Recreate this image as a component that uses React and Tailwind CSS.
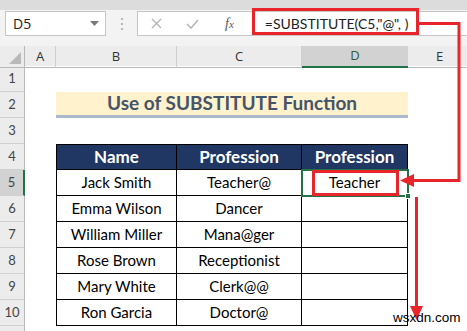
import React from "react";

const F = { fontFamily: "Lato, 'Noto Sans', sans-serif" };

const data = [
  ["Jack Smith", "Teacher@", "Teacher"],
  ["Emma Wilson", "Dancer", ""],
  ["William Miller", "Mana@ger", ""],
  ["Rose Brown", "Receptionist", ""],
  ["Mary White", "Clerk@@", ""],
  ["Ron Garcia", "Doctor@", ""],
];

function RowHead({ n, active }) {
  return (
    <div
      className={
        "h-[26px] flex items-center justify-center text-[13px] text-[#444] border-b border-[#d0d0d0] " +
        (active
          ? "bg-[#d2d2d2] border-r-2 border-r-[#217346]"
          : "bg-[#ececec] border-r border-r-[#b8b8b8]")
      }
    >
      {n}
    </div>
  );
}

const GRID = "grid grid-cols-[25px_31px_121px_125px_106px_1fr]";

export default function App() {
  return (
    <div className="relative w-[467px] h-[331px] overflow-hidden bg-white" style={{ fontFamily: "'Segoe UI', 'Open Sans', sans-serif" }}>
      {/* top band */}
      <div className="h-[10px] bg-[#dcdcdc]" />
      {/* formula row */}
      <div className="h-[36px] bg-[#f3f3f3] flex items-start pt-[1px]">
        <div className="ml-[5px] w-[101px] h-[25px] bg-white border border-[#c6c6c6] flex items-center justify-between pl-[7px] pr-[6px]">
          <span className="text-[14px] text-[#222]" style={{ fontFamily: "'Open Sans', sans-serif" }}>D5</span>
          <svg width="9" height="6" viewBox="0 0 9 6"><path d="M0 0h9L4.5 5z" fill="#7a7a7a" /></svg>
        </div>
        <div className="w-[31px] h-[25px] flex flex-col items-center justify-center gap-[3px]">
          <div className="w-[2px] h-[2px] bg-[#b5b5b5]" />
          <div className="w-[2px] h-[2px] bg-[#b5b5b5]" />
          <div className="w-[2px] h-[2px] bg-[#b5b5b5]" />
        </div>
        <div className="flex-1 h-[25px] bg-white border border-[#c6c6c6] border-r-0 flex items-center">
          <svg className="ml-[13px]" width="11" height="11" viewBox="0 0 11 11"><path d="M1 1l9 9M10 1l-9 9" stroke="#b3b3b3" strokeWidth="1.3" /></svg>
          <svg className="ml-[24px]" width="13" height="10" viewBox="0 0 13 10"><path d="M1 5l4 4 7-8" stroke="#b3b3b3" strokeWidth="1.5" fill="none" /></svg>
          <span className="ml-[26px] text-[14px] italic text-[#555]" style={{ fontFamily: "'Liberation Serif', serif" }}>
            f<span className="text-[11px]">x</span>
          </span>
          <span className="ml-[31px] text-[14px] text-[#222]" style={F}>=SUBSTITUTE(C5,"@", )</span>
        </div>
      </div>
      {/* column header */}
      <div className={GRID + " h-[20px] bg-[#ececec] text-[13px] text-[#333]"}>
        <div className="relative border-r border-[#b8b8b8] border-b border-b-[#b8b8b8]">
          <svg className="absolute right-[3px] bottom-[3px]" width="12" height="12" viewBox="0 0 12 12"><path d="M12 0V12H0z" fill="#b9b9b9" /></svg>
        </div>
        <div className="flex items-center justify-center border-r border-[#cfcfcf] border-b border-b-[#b8b8b8]">A</div>
        <div className="flex items-center justify-center border-r border-[#cfcfcf] border-b border-b-[#b8b8b8]">B</div>
        <div className="flex items-center justify-center border-r border-[#cfcfcf] border-b border-b-[#b8b8b8]">C</div>
        <div className="flex items-center justify-center bg-[#d2d2d2] border-b-2 border-[#217346] text-[#2d5d3d]">D</div>
        <div className="flex items-center justify-start pl-[28px] border-b border-b-[#b8b8b8]">E</div>
      </div>

      {/* rows */}
      <div className={GRID} style={F}>
        <RowHead n={1} />
        <div className="col-span-5" />
        <RowHead n={2} />
        <div />
        <div className="col-span-3 h-[26px] bg-[#fff2cc] border-b-[3px] border-[#acb9ca] flex items-center justify-center text-[19px] font-bold text-[#44546a]">
          Use of SUBSTITUTE Function
        </div>
        <div />
        <RowHead n={3} />
        <div className="col-span-5" />
        <RowHead n={4} />
        <div />
        {["Name", "Profession", "Profession"].map((t, i) => (
          <div
            key={i}
            className={
              "h-[26px] bg-[#203764] text-white font-bold text-[17px] flex items-center justify-center border-t border-b border-r border-black " +
              (i === 0 ? "border-l" : "")
            }
          >
            {t}
          </div>
        ))}
        <div />
        {data.map((r, ri) => (
          <React.Fragment key={ri}>
            <RowHead n={5 + ri} active={ri === 0} />
            <div />
            {r.map((t, i) => (
              <div
                key={i}
                className={
                  "h-[26px] text-[15px] text-black flex items-center justify-center border-b border-r border-black " +
                  (i === 0 ? "border-l" : "")
                }
              >
                {t}
              </div>
            ))}
            <div />
          </React.Fragment>
        ))}
        <RowHead n="" />
        <div className="col-span-5" />
      </div>

      {/* selection on D5 */}
      <div className="absolute left-[301px] top-[169px] w-[108px] h-[28px] border-2 border-[#217346]" />
      <div className="absolute left-[405px] top-[193px] w-[6px] h-[6px] bg-[#217346] border border-white" />
      {/* red boxes */}
      <div className="absolute left-[252px] top-[8px] w-[167px] h-[27px] border-[3px] border-[#e8252b]" />
      <div className="absolute left-[312px] top-[170px] w-[87px] h-[26px] border-[3px] border-[#e8252b]" />
      {/* arrows */}
      <svg className="absolute left-0 top-0" width="467" height="331" viewBox="0 0 467 331">
        <path d="M419 23.5H459V180.5H412" stroke="#e8252b" strokeWidth="3" fill="none" />
        <path d="M400 180.5L414 174V187z" fill="#e8252b" />
        <path d="M416.5 197V308" stroke="#e8252b" strokeWidth="3" />
        <path d="M410 306H423L416.5 320z" fill="#e8252b" />
      </svg>
      <div className="absolute left-[393px] top-[311px] text-[13.5px] text-black leading-none" style={{ fontFamily: "'Liberation Sans', sans-serif" }}>
        wsxdn.com
      </div>
    </div>
  );
}
